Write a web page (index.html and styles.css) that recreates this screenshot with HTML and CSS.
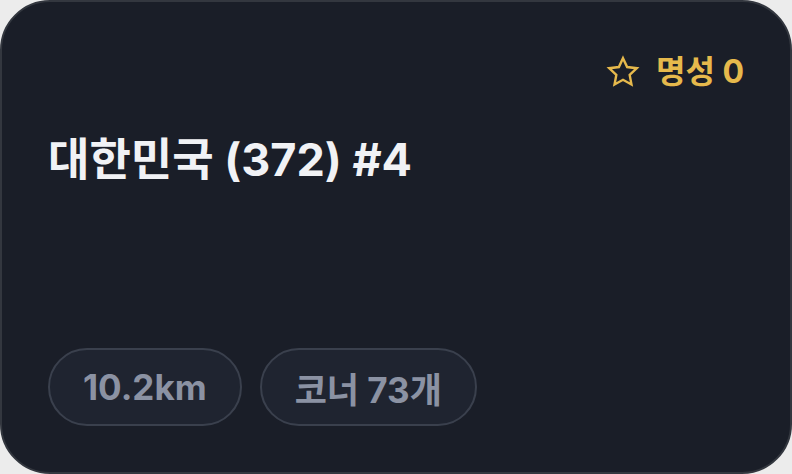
FILE: index.html
```html
<!DOCTYPE html>
<html lang="ko">
<head>
<meta charset="utf-8">
<link rel="stylesheet" href="styles.css">
</head>
<body>
<div class="card">
  <div class="top">
    <span class="fame">
      <svg class="star" viewBox="0 0 24 24" width="36" height="36"><path d="M12 2.8l2.75 5.9 6.45.8-4.75 4.45 1.2 6.4L12 17.2l-5.65 3.15 1.2-6.4L2.8 9.5l6.45-.8z" fill="none" stroke="currentColor" stroke-width="1.6" stroke-linejoin="miter"/></svg>
      <span class="fame-text">명성 0</span>
    </span>
  </div>
  <h1 class="title">대한민국 (372) #4</h1>
  <div class="pills">
    <span class="pill">10.2km</span>
    <span class="pill">코너 73개</span>
  </div>
</div>
</body>
</html>
```
FILE: styles.css
```css
html, body {
  margin: 0;
  padding: 0;
  background: #ececec;
}
body {
  font-family: Inter, "Noto Sans CJK KR", sans-serif;
}
.card {
  box-sizing: border-box;
  width: 792px;
  height: 474px;
  background: #1a1e28;
  border: 2px solid #33373f;
  border-radius: 50px;
  padding: 50px 46px 46px 46px;
  display: flex;
  flex-direction: column;
}
.top {
  display: flex;
  justify-content: flex-end;
}
.fame {
  display: flex;
  align-items: center;
  gap: 15px;
  color: #e6b94c;
  font-weight: 700;
  font-size: 32px;
  line-height: 40px;
}
.star {
  display: block;
}
.title {
  margin: 40px 0 0 0;
  color: #f1f2f5;
  font-size: 45px;
  font-weight: 700;
  line-height: 56px;
}
.pills {
  margin-top: auto;
  display: flex;
  gap: 18px;
}
.pill {
  box-sizing: border-box;
  height: 78px;
  padding: 0 33px;
  display: flex;
  align-items: center;
  border: 2px solid #3a404d;
  border-radius: 40px;
  background: #1f2430;
  color: #8b92a3;
  font-size: 35px;
  font-weight: 700;
}
```
